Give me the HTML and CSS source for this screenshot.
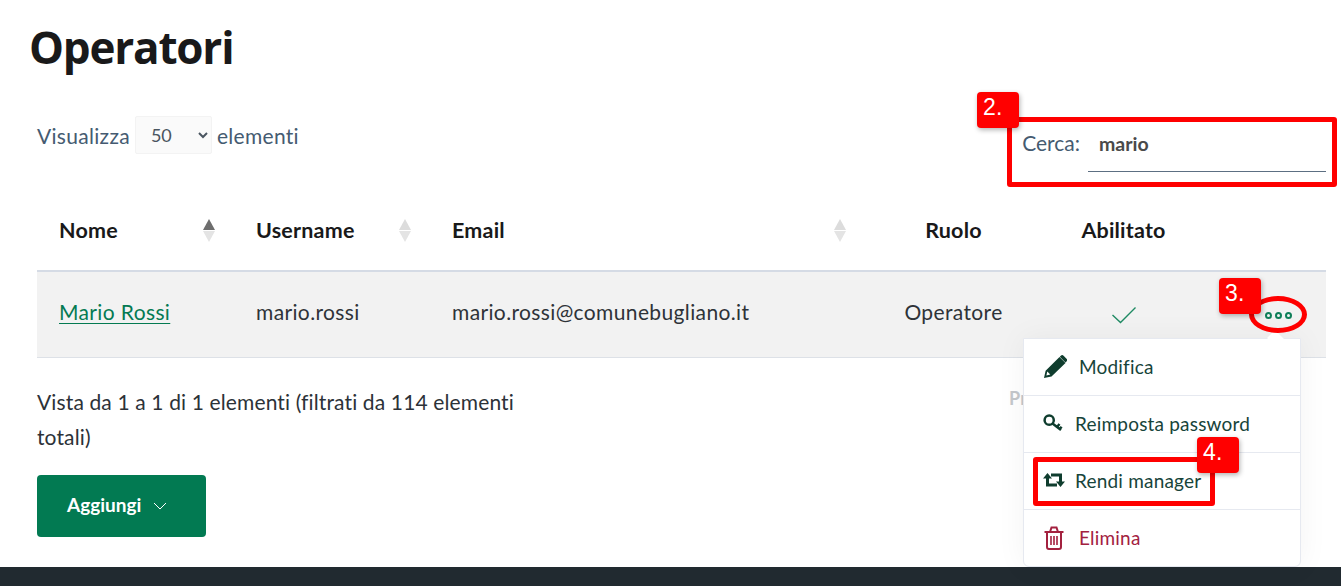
FILE: index.html
```html
<!DOCTYPE html>
<html lang="it">
<head>
<meta charset="utf-8">
<title>Operatori</title>
<link rel="stylesheet" href="styles.css">
</head>
<body>
<main class="page">
  <h1 class="title">Operatori</h1>
  <div class="controls">
    <label class="length">Visualizza
      <select class="length-select"><option>50</option></select>
      elementi</label>
    <label class="search">Cerca:<input class="search-input" type="text" value="mario"></label>
  </div>
  <table class="grid">
    <colgroup>
      <col class="c-nome"><col class="c-user"><col class="c-email"><col class="c-ruolo"><col class="c-abil"><col class="c-act">
    </colgroup>
    <thead>
      <tr>
        <th><span class="th-in">Nome<span class="sort"><i class="up on"></i><i class="down"></i></span></span></th>
        <th><span class="th-in">Username<span class="sort"><i class="up"></i><i class="down"></i></span></span></th>
        <th><span class="th-in th-email">Email<span class="sort"><i class="up"></i><i class="down"></i></span></span></th>
        <th class="center">Ruolo</th>
        <th class="center">Abilitato</th>
        <th></th>
      </tr>
    </thead>
    <tbody>
      <tr>
        <td><a class="link" href="#">Mario Rossi</a></td>
        <td>mario.rossi</td>
        <td>mario.rossi@comunebugliano.it</td>
        <td class="center">Operatore</td>
        <td class="center">
          <svg class="check" viewBox="0 0 26 18" width="26" height="18"><path d="M1.5 9l8 7.500L24.500 1.500" fill="none" stroke="#1f8a63" stroke-width="1.400"/></svg>
        </td>
        <td class="act-cell">
          <span class="dots"><i></i><i></i><i></i></span>
        </td>
      </tr>
    </tbody>
  </table>
  <div class="below">
    <div class="info">Vista da 1 a 1 di 1 elementi (filtrati da 114 elementi totali)</div>
    <div class="pager">Precedente</div>
  </div>
  <button class="add" type="button">Aggiungi
    <svg viewBox="0 0 14 8" width="14" height="8"><path d="M1 1l6 6 6-6" fill="none" stroke="#fff" stroke-width="1"/></svg>
  </button>
</main>
<footer class="footer"></footer>

<div class="menu">
  <span class="menu-tip"></span>
  <a class="item" href="#">
    <svg class="ico" viewBox="0 0 24 24" width="24" height="24"><path fill="#0f3d2e" d="M1 23l1.600-7.200L16.500 2l6 6L8.500 21.500zM4.300 16.600l-.9 3.900 3.900-.9z M17.800 .8a2 2 0 0 1 2.800 0l2.900 2.900a2 2 0 0 1 0 2.800l-1 1-5.700-5.700z"/></svg>
    Modifica</a>
  <a class="item" href="#">
    <svg class="ico-s" viewBox="0 0 20 18" width="20" height="18"><g fill="none" stroke="#0f3d2e" stroke-width="2.500"><circle cx="6.200" cy="6.200" r="4.600"/><path d="M9.500 9.500l8.500 6.500M14 13l2.500-3M16.800 15l1.800-2.200"/></g></svg>
    Reimposta password</a>
  <a class="item item-tight" href="#">
    <svg class="ico-s" viewBox="0 0 22 16" width="22" height="16"><g fill="none" stroke="#0f3d2e" stroke-width="3"><path d="M4.500 5v8h9.500M17.500 11V3H8"/></g><path fill="#0f3d2e" d="M0 6.500h9L4.500 1zM13 9.500h9L17.500 15z"/></svg>
    Rendi manager</a>
  <a class="item danger" href="#">
    <svg class="ico" viewBox="0 0 24 24" width="24" height="24"><g fill="none" stroke="#a3213f" stroke-width="2"><path d="M1.500 6h19M4 6v15a2 2 0 0 0 2 2h10a2 2 0 0 0 2-2V6M7 6l1.500-4.500h5L15 6"/></g><path stroke="#a3213f" stroke-width="1.600" d="M8 10v9M11 10v9M14 10v9"/></svg>
    Elimina</a>
</div>

<div class="mark mark-search"></div>
<div class="mark mark-manager"></div>
<div class="mark-ellipse"></div>
<span class="badge badge-2">2.</span>
<span class="badge badge-3">3.</span>
<span class="badge badge-4">4.</span>
</body>
</html>
```
FILE: styles.css
```css
* { box-sizing: border-box; }
html, body { margin: 0; height: 100%; overflow: hidden; }
body {
  position: relative;
  display: flex;
  flex-direction: column;
  height: 586px;
  background: #fff;
  color: #19191a;
  font-family: Lato, "Noto Sans", sans-serif;
  font-size: 21px;
  letter-spacing: .2px;
}
.page { flex: 1; padding: 0 15px 0 37px; min-height: 0; }
.title {
  margin: 17px 0 0 -8px;
  font-family: "Open Sans", sans-serif;
  font-size: 44px;
  line-height: 60px;
  font-weight: 700;
  letter-spacing: -1.2px;
}
.controls {
  display: flex;
  justify-content: space-between;
  align-items: flex-start;
  margin-top: 39px;
  height: 80px;
  color: #455b71;
}
.length { display: flex; align-items: center; gap: 5px; height: 38px; letter-spacing: .3px; }
.length-select {
  width: 77px;
  height: 38px;
  padding: 0 0 0 11px;
  border: 1px solid #f3f3f3;
  border-radius: 2px;
  background: #fafafa;
  color: #4a5560;
  font: inherit;
  font-size: 18px;
}
.search { display: flex; justify-content: flex-end; gap: 8px; align-items: flex-start; line-height: 54px; letter-spacing: 0; }
.search-input {
  flex: none;
  width: 238px;
  height: 56px;
  padding: 0 11px;
  border: 0;
  border-bottom: 1px solid #5c6f82;
  outline: 0;
  color: #4a4a4a;
  font: inherit;
  font-size: 19.500px;
  font-weight: 700;
}
.grid { width: 1289px; table-layout: fixed; border-collapse: collapse; }
.c-nome { width: 197px; }
.c-user { width: 196px; }
.c-email { width: 430px; }
.c-ruolo { width: 187px; }
.c-abil { width: 153px; }
.c-act { width: 126px; }
th {
  height: 75px;
  padding: 0 22px 6px;
  border-bottom: 2px solid #d5dbe5;
  text-align: left;
  font-weight: 700;
  font-size: 21.500px;
  color: #19191a;
}
td {
  height: 86px;
  padding: 0 22px 5px;
  background: #f2f2f2;
  border-bottom: 1px solid #dde1e7;
  color: #2e3338;
  white-space: nowrap;
  letter-spacing: .37px;
}
.center { text-align: center; }
.th-in { display: flex; justify-content: space-between; align-items: center; margin-right: -3px; }
.th-email { margin-right: -8px; }
.sort { display: flex; flex-direction: column; gap: 1px; }
.sort i { display: block; width: 0; height: 0; border-left: 6px solid transparent; border-right: 6px solid transparent; }
.sort .up { border-bottom: 11px solid #dcdcdc; }
.sort .down { border-top: 11px solid #e4e4e4; }
.sort .up.on { border-bottom-color: #6e6e6e; }
.link { color: #047a52; text-decoration: underline; text-underline-offset: 3px; text-decoration-thickness: 1px; }
.check { display: block; margin: 6px auto 0; }
.act-cell { padding: 0; position: relative; }
.dots { display: flex; gap: 3px; justify-content: flex-end; padding-right: 34px; padding-top: 3px; }
.dots i { width: 7px; height: 7px; border: 2px solid #0f7f59; border-radius: 50%; }
.below { display: flex; justify-content: space-between; margin-top: 27px; height: 81px; }
.info { width: 490px; line-height: 35px; color: #2c3238; letter-spacing: .13px; margin-top: -1px; }
.pager { margin: 2px 187px 0 0; color: #c4c7cb; font-weight: 700; font-size: 18px; width: 130px; }
.add {
  display: flex;
  align-items: center;
  gap: 12px;
  width: 169px;
  height: 62px;
  margin-top: 9px;
  padding: 0 0 3px 30px;
  border: 0;
  border-radius: 4px;
  background: #027a52;
  color: #fff;
  font: inherit;
  font-size: 19px;
  font-weight: 700;
}
.add svg { margin-top: 4px; }
.footer { height: 19px; background: #212a30; flex: none; }

.menu {
  position: absolute;
  left: 1023px;
  top: 338px;
  width: 278px;
  height: 229px;
  background: #fff;
  border: 1px solid #e6e9f0;
  border-radius: 0 0 6px 6px;
  box-shadow: 0 0 30px rgba(0, 0, 0, .05);
  display: flex;
  flex-direction: column;
}
.menu-tip { position: absolute; right: 14px; top: -8px; width: 20px; height: 16px; background: #fff; transform: rotate(45deg) scale(.7); }
.item {
  flex: 1;
  display: flex;
  align-items: center;
  gap: 12px;
  padding: 0 0 2px 19px;
  border-bottom: 1px solid #e6e9f0;
  color: #17443a;
  text-decoration: none;
  font-size: 19px;
}
.item:last-child { border-bottom: 0; }
.item-tight { gap: 10px; }
.ico { flex: none; margin-top: 2px; }
.ico-s { flex: none; }
.danger { color: #a3213f; }

.mark { position: absolute; border: 5px solid #ff0000; border-radius: 3px; }
.mark-search { left: 1007px; top: 117px; width: 330px; height: 70px; }
.mark-manager { left: 1033px; top: 457px; width: 182px; height: 49px; }
.mark-ellipse { position: absolute; left: 1249px; top: 296px; width: 58px; height: 37px; border: 5px solid #ff0000; border-radius: 50%; }
.badge {
  position: absolute;
  width: 42px;
  height: 36px;
  padding-left: 6px;
  background: #ff0000;
  border-radius: 4px;
  box-shadow: 1px 2px 5px rgba(0, 0, 0, .3);
  color: #fff;
  font-family: "Liberation Sans", sans-serif;
  font-size: 23px;
  line-height: 30px;
}
.badge-2 { left: 977px; top: 92px; }
.badge-3 { left: 1219px; top: 278px; }
.badge-4 { left: 1197px; top: 437px; }
```
